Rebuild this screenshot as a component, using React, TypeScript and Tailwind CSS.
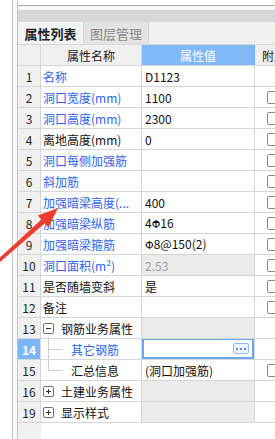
import type { ReactNode } from 'react';

type Row = {
  no: number;
  name: string;
  blue?: boolean;
  value?: ReactNode;
  grayValue?: boolean;
  mutedText?: boolean;
  check?: boolean;
  tree?: 'open' | 'closed' | 'child' | 'last';
  selected?: boolean;
  editing?: boolean;
};

function BarA() {
  return <span className="font-['DejaVu_Sans'] text-[11px]">Φ</span>;
}

function BarC() {
  return (
    <span className="relative inline-block font-['DejaVu_Sans'] text-[11px]">
      Φ
      <span className="absolute left-[1px] right-[1px] top-[5px] h-px bg-black" />
    </span>
  );
}

const rows: Row[] = [
  { no: 1, name: '名称', blue: true, value: 'D1123' },
  { no: 2, name: '洞口宽度(mm)', blue: true, value: '1100', check: true },
  { no: 3, name: '洞口高度(mm)', blue: true, value: '2300', check: true },
  { no: 4, name: '离地高度(mm)', value: '0', check: true },
  { no: 5, name: '洞口每侧加强筋', blue: true, check: true },
  { no: 6, name: '斜加筋', blue: true, check: true },
  { no: 7, name: '加强暗梁高度(...', blue: true, value: '400', check: true },
  { no: 8, name: '加强暗梁纵筋', blue: true, value: <>4<BarC />16</>, check: true },
  { no: 9, name: '加强暗梁箍筋', blue: true, value: <><BarA />8@150(2)</>, check: true },
  { no: 10, name: '洞口面积(m²)', blue: true, value: '2.53', grayValue: true, mutedText: true, check: true },
  { no: 11, name: '是否随墙变斜', value: '是', check: true },
  { no: 12, name: '备注', check: true },
  { no: 13, name: '钢筋业务属性', tree: 'open', grayValue: true },
  { no: 14, name: '其它钢筋', blue: true, tree: 'child', selected: true, editing: true },
  { no: 15, name: '汇总信息', tree: 'last', value: '(洞口加强筋)', check: true },
  { no: 16, name: '土建业务属性', tree: 'closed', grayValue: true },
  { no: 19, name: '显示样式', tree: 'closed', grayValue: true },
];

function ToggleBox({ open }: { open: boolean }) {
  return (
    <span className="relative flex h-[11px] w-[11px] shrink-0 items-center justify-center rounded-[2px] border border-[#6e6e6e] bg-white">
      <span className="h-px w-[5px] bg-[#333]" />
      {!open && <span className="absolute h-[5px] w-px bg-[#333]" />}
    </span>
  );
}

function NameCell({ row }: { row: Row }) {
  const color = row.blue ? 'text-[#2f63e6]' : 'text-[#111]';
  if (row.tree === 'open' || row.tree === 'closed') {
    return (
      <div className="relative flex items-center gap-[7px] pl-[2px]">
        <ToggleBox open={row.tree === 'open'} />
        <span className={color}>{row.name}</span>
        {row.tree === 'open' && (
          <span className="absolute left-[7px] top-[16px] h-[5px] w-px bg-[#cfcfcf]" />
        )}
      </div>
    );
  }
  if (row.tree === 'child' || row.tree === 'last') {
    return (
      <div className="relative flex h-full items-center pl-[30px]">
        <span
          className={`absolute left-[7px] top-0 w-px bg-[#cfcfcf] ${row.tree === 'child' ? 'h-[21px]' : 'h-[10px]'}`}
        />
        <span className="absolute left-[7px] top-[10px] h-px w-[14px] bg-[#cfcfcf]" />
        <span className={color}>{row.name}</span>
      </div>
    );
  }
  return <div className={`truncate pl-[2px] ${color}`}>{row.name}</div>;
}

function TableRow({ row }: { row: Row }) {
  return (
    <div className="grid h-[21px] grid-cols-[23px_101px_113px_1fr] border-b border-[#d6d6d6]">
      <div
        className={`flex items-center justify-center border-r border-[#d6d6d6] ${row.selected ? 'bg-[#7db6f6] font-bold text-white' : 'bg-[#f0f0f0] text-[#222]'}`}
      >
        {row.no}
      </div>
      <div className="flex items-center overflow-hidden border-r border-[#d6d6d6] bg-white">
        <NameCell row={row} />
      </div>
      <div
        className={`flex items-center overflow-hidden border-r border-[#d6d6d6] ${row.grayValue ? 'bg-[#ebebeb]' : 'bg-white'} ${row.mutedText ? 'text-[#9a9a9a]' : 'text-[#111]'}`}
      >
        {row.editing ? (
          <div className="mt-[-1px] flex h-[21px] w-full items-center justify-end border-2 border-[#6aa8ee] bg-white pr-[3px]">
            <span className="flex h-[11px] w-[16px] items-center justify-center gap-[2px] rounded-[2px] border border-[#8fbcf0] bg-[#eef5fe]">
              <span className="h-[2px] w-[2px] bg-[#4b8fe0]" />
              <span className="h-[2px] w-[2px] bg-[#4b8fe0]" />
              <span className="h-[2px] w-[2px] bg-[#4b8fe0]" />
            </span>
          </div>
        ) : (
          <span className="whitespace-nowrap pl-[3px]">{row.value}</span>
        )}
      </div>
      <div className="flex items-center bg-white pl-[12px]">
        {row.check && <span className="h-[13px] w-[13px] shrink-0 rounded-[2px] border border-[#8a8a8a] bg-white" />}
      </div>
    </div>
  );
}

export default function App() {
  return (
    <div className="relative flex h-[439px] w-[275px] overflow-hidden bg-white font-['Noto_Sans_CJK_SC',sans-serif] text-[12px] leading-[15px]">
      <div className="w-[12px] shrink-0 bg-white" />
      <div className="w-[5px] shrink-0 border-l border-[#c4c4c4] bg-[#fafafa]" />
      <div className="flex min-w-0 flex-1 flex-col border-l border-[#c4c4c4]">
        <div className="h-[6px] shrink-0 border-b border-[#aaaaaa] bg-white" />
        <div className="h-[4px] shrink-0 bg-[#f7f7f7]" />
        <div className="h-[12px] shrink-0 bg-[#d5d7db]" />
        <div className="flex h-[22px] shrink-0 bg-[#f0f0f0]">
          <div className="flex w-[65px] items-center justify-center bg-[#f3f3f3] text-[13px] font-bold text-[#222]">
            属性列表
          </div>
          <div className="flex w-[66px] items-center justify-center border-x border-[#d2d2d2] bg-[#e3e3e3] text-[13px] text-[#8a8a8a]">
            图层管理
          </div>
        </div>
        <div className="grid h-[22px] shrink-0 grid-cols-[23px_101px_113px_1fr] border-y border-[#d6d6d6]">
          <div className="border-r border-[#d6d6d6] bg-[#f0f0f0]" />
          <div className="flex items-center justify-center border-r border-[#d6d6d6] bg-[#f0f0f0] text-[#222]">
            属性名称
          </div>
          <div className="flex items-center justify-center border-r border-[#6ea9ec] bg-[#80b9f7] text-white">
            属性值
          </div>
          <div className="flex items-center overflow-hidden whitespace-nowrap bg-[#f0f0f0] pl-[7px] text-[#222]">
            附加
          </div>
        </div>
        {rows.map(row => (
          <TableRow key={row.no} row={row} />
        ))}
        <div className="flex flex-1">
          <div className="w-[23px] bg-[#f0f0f0]" />
          <div className="flex-1 bg-white" />
        </div>
      </div>

      <svg className="pointer-events-none absolute left-0 top-[200px]" width="70" height="70" viewBox="0 0 70 70">
        <path
          d="M58 8 L37.8 15.4 L41.4 19.5 L0 57.5 L0 62 L44.8 23.3 L48.4 27.4 Z"
          fill="#ee3b2f"
        />
      </svg>
    </div>
  );
}
